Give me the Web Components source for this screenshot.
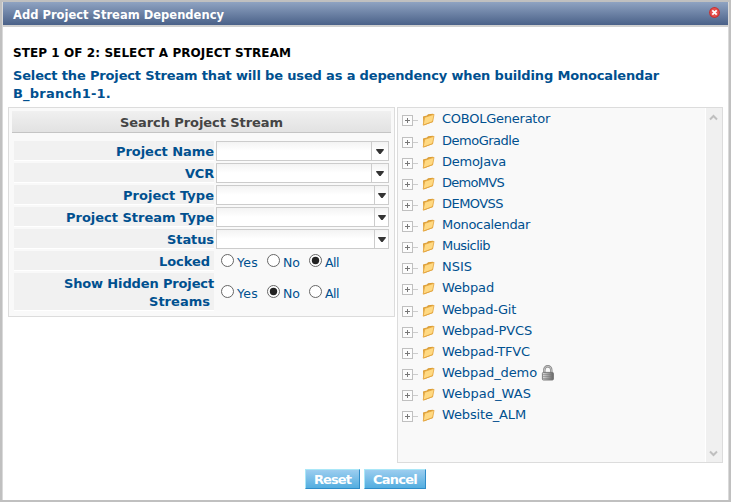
<!DOCTYPE html>
<html lang="en">
<head>
<meta charset="utf-8">
<title>Add Project Stream Dependency</title>
<style>
html,body{margin:0;height:100%;overflow:hidden}
body{font:13px/18px "DejaVu Sans",Verdana,sans-serif;color:#00508f;background:#fff}
</style>
</head>
<body>
<stream-dialog></stream-dialog>
<script>
const define = (name, html, setup) => customElements.define(name, class extends HTMLElement {
  connectedCallback() {
    if (this.shadowRoot) return;
    const root = this.attachShadow({mode: 'open'});
    const t = document.createElement('template');
    t.innerHTML = typeof html === 'function' ? html(this) : html;
    root.append(t.content.cloneNode(true));
    if (setup) setup(this, root);
  }
});

/* A line of text tracked to a given measure */
define('fit-text', '<style>:host{display:inline-block;white-space:nowrap}span{display:inline-block}</style><span><slot></slot></span>', (el, root) => {
  const s = root.querySelector('span'), w = +el.getAttribute('w');
  const n = el.textContent.length;
  const gap = (w - s.getBoundingClientRect().width) / n;
  s.style.letterSpacing = gap.toFixed(3) + 'px';
  el.style.width = w + 'px';
});

define('close-button', `<style>:host{display:block;width:11px;height:11px}svg{display:block}</style>
<svg width="11" height="11" viewBox="0 0 11 11"><circle cx="5.5" cy="5.5" r="5.4" fill="#c9302f"/><circle cx="5.5" cy="5.5" r="4.4" fill="#e5504d"/><path d="M3.3 3.3l4.4 4.4M7.7 3.3l-4.4 4.4" stroke="#fff" stroke-width="1.8"/></svg>`);

define('title-bar', `<style>:host{display:flex;justify-content:space-between;height:23px;background:linear-gradient(#8fa3c2,#4a6188) padding-box;border-bottom:2px solid #d0d0d0;color:#fff;font:bold 11.5px/26px "DejaVu Sans",sans-serif;padding:0 8px 0 10px}
close-button{margin-top:5px}</style><slot></slot><close-button></close-button>`);

define('combo-box', el => `<style>:host{display:flex;box-sizing:border-box;width:173px;height:20px;border:1px solid #ccc;background:linear-gradient(#f3f3f3,#fff 50%)}
i{flex:1}b{box-sizing:border-box;width:${el.hasAttribute('wide') ? 17 : 14}px;border-left:1px solid #ccc;display:flex;align-items:center;justify-content:center}svg{display:block}</style>
<i></i><b><svg width="8" height="5" viewBox="0 0 8 5"><path d="M.2 0h7.6v1L4.6 5H3.4L.2 1z" fill="#333"/></svg></b>`);

define('radio-option', el => `<style>:host{display:flex;font-size:12.5px;line-height:18px}svg{display:block;margin:0 3px 0 0}fit-text{margin-top:1px}</style>
<svg width="13" height="14" viewBox="0 0 13 14"><circle cx="6.5" cy="7.5" r="6" fill="#fff" stroke="#666"/>${el.hasAttribute('checked') ? '<circle cx="6.5" cy="7.5" r="3.7" fill="#222"/>' : ''}</svg><fit-text w="${el.getAttribute('w')}">${el.getAttribute('label')}</fit-text>`);

define('radio-set', el => {
  const v = el.getAttribute('value');
  return `<style>:host{display:flex;padding:0 0 0 5px}radio-option:nth-of-type(1){width:46px}radio-option:nth-of-type(2){width:42px}</style>` +
    [['Yes', 21], ['No', 17], ['All', 14]].map(([l, w]) => `<radio-option label="${l}" w="${w}" ${l === v ? 'checked' : ''}></radio-option>`).join('');
});

define('field-row', `<style>:host{display:flex;gap:2px;height:20px;margin-bottom:2px}
:host([tall]){height:38px;margin:0}
.l{box-sizing:border-box;width:200px;text-align:right;font-weight:bold;background:#f1f1f1;border-bottom:1px solid #fff;padding-top:2px}
:host([inset]) .l{padding-right:4px}
:host([tall]) .l{display:flex;flex-direction:column;align-items:flex-end}
:host([tall]) .v{padding-top:11px}
:host([inset]) .v{padding-top:2px}</style><div class="l"><slot name="label"></slot></div><div class="v"><slot></slot></div>`);

define('search-panel', `<style>:host{display:block;box-sizing:border-box;width:387px;height:210px;border:1px solid #dcdcdc;background:#f9f9f9;padding:3px}
header{box-sizing:border-box;height:22px;text-align:center;color:#444;font-weight:bold;line-height:23px;background:linear-gradient(#f0f0f0,#e2e2e2);border-bottom:1px solid #c4c4c4}
section{padding:8px 2px 0}
.r{margin-right:4px}</style>
<header><fit-text w="163">Search Project Stream</fit-text></header>
<section>
<field-row><fit-text slot="label" w="98">Project Name</fit-text><combo-box wide></combo-box></field-row>
<field-row><fit-text slot="label" w="29">VCR</fit-text><combo-box wide></combo-box></field-row>
<field-row><fit-text slot="label" w="91">Project Type</fit-text><combo-box></combo-box></field-row>
<field-row><fit-text slot="label" w="148">Project Stream Type</fit-text><combo-box></combo-box></field-row>
<field-row><fit-text slot="label" w="47">Status</fit-text><combo-box></combo-box></field-row>
<field-row inset><fit-text slot="label" w="51">Locked</fit-text><radio-set value="All"></radio-set></field-row>
<field-row tall><fit-text slot="label" w="150">Show Hidden Project</fit-text><fit-text slot="label" class="r" w="61">Streams</fit-text><radio-set value="No"></radio-set></field-row>
</section>`);

define('tree-item', el => `<style>:host{display:flex;height:21.14px;padding-left:4px;line-height:20px}
svg{display:block;flex:none}.e{margin-top:5px}.f{margin:4px 7px 0 3px}.k{margin:2px 0 0 4px}</style>
<svg class="e" width="17" height="12" viewBox="0 0 17 12"><rect x=".5" y="1.5" width="10" height="10" fill="#fcfcfc" stroke="#c0c0c0"/><path d="M3 6.5h5M5.5 4v5" stroke="#777"/><path d="M11 6.5h5" stroke="#ccc"/></svg>
<svg class="f" width="13" height="13" viewBox="0 0 13 13"><path d="M1 3.5L5 2.4 6 1.2 11 .8V9L1.6 12.4z" fill="#d99b32"/><path d="M2.6 4.3L12 1.3 10.7 8.6 1.2 12.1z" fill="#ffd982" stroke="#e3a33c" stroke-width=".8"/></svg>
<fit-text w="${el.getAttribute('w')}">${el.getAttribute('label')}</fit-text>
${el.hasAttribute('locked') ? '<svg class="k" width="14" height="16" viewBox="0 0 14 16"><defs><linearGradient id="g"><stop offset="0" stop-color="#ddd"/><stop offset="1" stop-color="#666"/></linearGradient></defs><path d="M3.3 8V5a3.5 3.7 0 0 1 7 0v3" fill="none" stroke="#888" stroke-width="2.4"/><path d="M3.3 8V5a3.5 3.7 0 0 1 7 0v3" fill="none" stroke="#ddd" stroke-width=".7"/><rect x="1.4" y="7.4" width="11" height="7.6" rx="1" fill="url(#g)" stroke="#707070" stroke-width=".9"/><path d="M2 9.5h10M2 11.5h10M2 13.5h10" stroke="#777" stroke-width=".5"/></svg>' : ''}`);

define('scroll-rail', `<style>:host{display:flex;flex-direction:column;justify-content:space-between;align-items:center;box-sizing:border-box;width:17px;border-left:1px solid #fff;background:#f0f0f0;padding:6px 1px 5px 0}svg{display:block}</style>
<svg width="9" height="7" viewBox="0 0 9 7"><path d="M1 5.5L4.5 2 8 5.5" fill="none" stroke="#bfbfbf" stroke-width="2"/></svg>
<svg width="9" height="7" viewBox="0 0 9 7"><path d="M1 1.5L4.5 5 8 1.5" fill="none" stroke="#bfbfbf" stroke-width="2"/></svg>`);

const projects = [['COBOLGenerator',108],['DemoGradle',77],['DemoJava',64],['DemoMVS',62],['DEMOVSS',61],['Monocalendar',88],['Musiclib',48],['NSIS',30],['Webpad',52],['Webpad-Git',74],['Webpad-PVCS',90],['Webpad-TFVC',88],['Webpad_demo',95],['Webpad_WAS',89],['Website_ALM',84]];
define('project-tree', `<style>:host{display:flex;box-sizing:border-box;width:326px;height:356px;border:1px solid #dcdcdc;background:#f9f9f9}div{flex:1;padding-top:1.4px}</style>
<div>${projects.map(([l, w]) => `<tree-item label="${l}" w="${w}" ${l === 'Webpad_demo' ? 'locked' : ''}></tree-item>`).join('')}</div><scroll-rail></scroll-rail>`);

define('push-button', `<style>:host{display:block;box-sizing:border-box;height:20px;border:1px solid;border-color:#a9e7f8 #2f8cc8 #2f8cc8 #a9e7f8;background:linear-gradient(#9ccdef,#53aee0);color:#fff;font-weight:bold;text-align:center;line-height:19px}</style><slot></slot>`);

define('stream-dialog', `<style>:host{display:flex;flex-direction:column;box-sizing:border-box;width:731px;height:502px;border:2px solid #c0c0c0;background:#fff}
.in{flex:1;border:solid #dadada;border-width:0 1px}
h1,p{margin:0;font-size:13px;line-height:18px;font-weight:bold}
h1{color:#000;padding:17px 10px 0}p{padding:5px 10px 0}p fit-text{display:block}
.cols{display:flex;gap:2px;padding:4px 5px 0;align-items:flex-start}
footer{display:flex;gap:4px;padding:6px 0 0 302px}
.a{width:55px}.b{width:62px}h1{font-size:12px}h1 fit-text{display:block}</style>
<div class="in"><title-bar><fit-text w="211">Add Project Stream Dependency</fit-text></title-bar>
<h1><fit-text w="278">STEP 1 OF 2: SELECT A PROJECT STREAM</fit-text></h1>
<p><fit-text w="646">Select the Project Stream that will be used as a dependency when building Monocalendar</fit-text><fit-text w="98">B_branch1-1.</fit-text></p>
<div class="cols"><search-panel></search-panel><project-tree></project-tree></div>
<footer><push-button class="a"><fit-text w="37">Reset</fit-text></push-button><push-button class="b"><fit-text w="44">Cancel</fit-text></push-button></footer></div>`);
</script>
</body>
</html>
